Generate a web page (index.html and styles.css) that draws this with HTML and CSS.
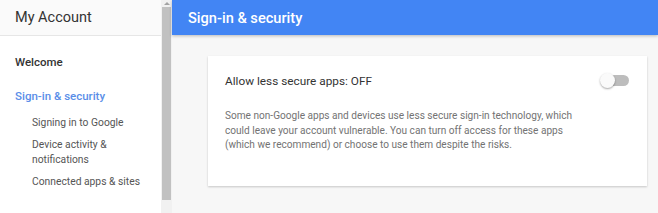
FILE: index.html
```html
<!DOCTYPE html>
<html lang="en">
<head>
    <meta charset="UTF-8">
    <title>My Account - Sign-in &amp; security</title>
    <link rel="stylesheet" href="styles.css">
</head>
<body>
    <div class="layout">
        <!-- Sidebar -->
        <nav class="sidebar">
            <div class="sidebar-header">My Account</div>
            <ul class="nav-list">
                <li class="nav-item">Welcome</li>
                <li class="nav-item active">Sign-in &amp; security</li>
                <li class="nav-sub">Signing in to Google</li>
                <li class="nav-sub">Device activity &amp;<br>notifications</li>
                <li class="nav-sub">Connected apps &amp; sites</li>
            </ul>
        </nav>

        <div class="scrollbar">
            <div class="scroll-arrow"></div>
            <div class="scroll-thumb"></div>
        </div>

        <!-- Main -->
        <main class="main">
            <header class="page-header">Sign-in &amp; security</header>

            <div class="card">
                <div class="card-row">
                    <div class="card-title">Allow less secure apps: OFF</div>
                    <div class="toggle">
                        <div class="toggle-track"></div>
                        <div class="toggle-thumb"></div>
                    </div>
                </div>
                <p class="card-text">
                    Some non-Google apps and devices use less secure sign-in technology, which
                    could leave your account vulnerable. You can turn off access for these apps
                    (which we recommend) or choose to use them despite the risks.
                </p>
            </div>
        </main>
    </div>
</body>
</html>
```

FILE: styles.css
```css
* {
    margin: 0;
    padding: 0;
    box-sizing: border-box;
}

body {
    font-family: Roboto, "Liberation Sans", Arial, sans-serif;
    background: #f5f5f5;
    width: 658px;
    height: 213px;
    overflow: hidden;
}

.layout {
    display: flex;
    height: 213px;
}

/* Sidebar */
.sidebar {
    width: 161px;
    background: #fff;
    flex-shrink: 0;
}

.sidebar-header {
    height: 36px;
    padding: 9px 0 0 15px;
    font-size: 14.5px;
    color: #333;
    background: #fafafa;
    border-bottom: 1px solid #e6e6e6;
}

.nav-list {
    list-style: none;
    padding-top: 19px;
}

.nav-item {
    padding-left: 15px;
    font-size: 11.5px;
    font-weight: 500;
    color: #333;
    height: 34px;
}

.nav-item.active {
    color: #5a8ee8;
    height: 26px;
}

.nav-sub {
    padding-left: 32px;
    font-size: 10.3px;
    color: #555;
    line-height: 15px;
    margin-bottom: 7px;
}

/* Scrollbar */
.scrollbar {
    width: 11px;
    background: #f1f1f1;
    display: flex;
    flex-direction: column;
    align-items: center;
    flex-shrink: 0;
}

.scroll-arrow {
    width: 0;
    height: 0;
    margin: 2px 0 2px;
    border-left: 3px solid transparent;
    border-right: 3px solid transparent;
    border-bottom: 3px solid #a3a3a3;
}

.scroll-thumb {
    width: 9px;
    height: 193px;
    background: #c1c1c1;
}

/* Main */
.main {
    flex: 1;
    background: #f7f7f7;
}

.page-header {
    height: 35px;
    background: #4285f4;
    color: #fff;
    font-size: 14.6px;
    font-weight: 500;
    padding: 9px 0 0 16px;
    box-shadow: 0 1px 3px rgba(0, 0, 0, 0.25);
}

.card {
    margin: 21px 11px 0 36px;
    height: 130px;
    background: #fff;
    box-shadow: 0 1px 2px rgba(0, 0, 0, 0.2);
    padding: 17px 17px 0 17px;
}

.card-row {
    display: flex;
    justify-content: space-between;
    align-items: center;
    height: 16px;
}

.card-title {
    font-size: 11.8px;
    color: #333;
}

.toggle {
    position: relative;
    width: 30px;
    height: 16px;
}

.toggle-track {
    position: absolute;
    left: 4px;
    top: 2px;
    width: 25px;
    height: 11px;
    border-radius: 6px;
    background: #bdbdbd;
}

.toggle-thumb {
    position: absolute;
    left: 0;
    top: 0;
    width: 15px;
    height: 15px;
    border-radius: 50%;
    background: #fafafa;
    box-shadow: 0 1px 2px rgba(0, 0, 0, 0.35);
}

.card-text {
    margin-top: 20px;
    font-size: 10.1px;
    line-height: 14.5px;
    color: #737373;
    width: 370px;
}
```
